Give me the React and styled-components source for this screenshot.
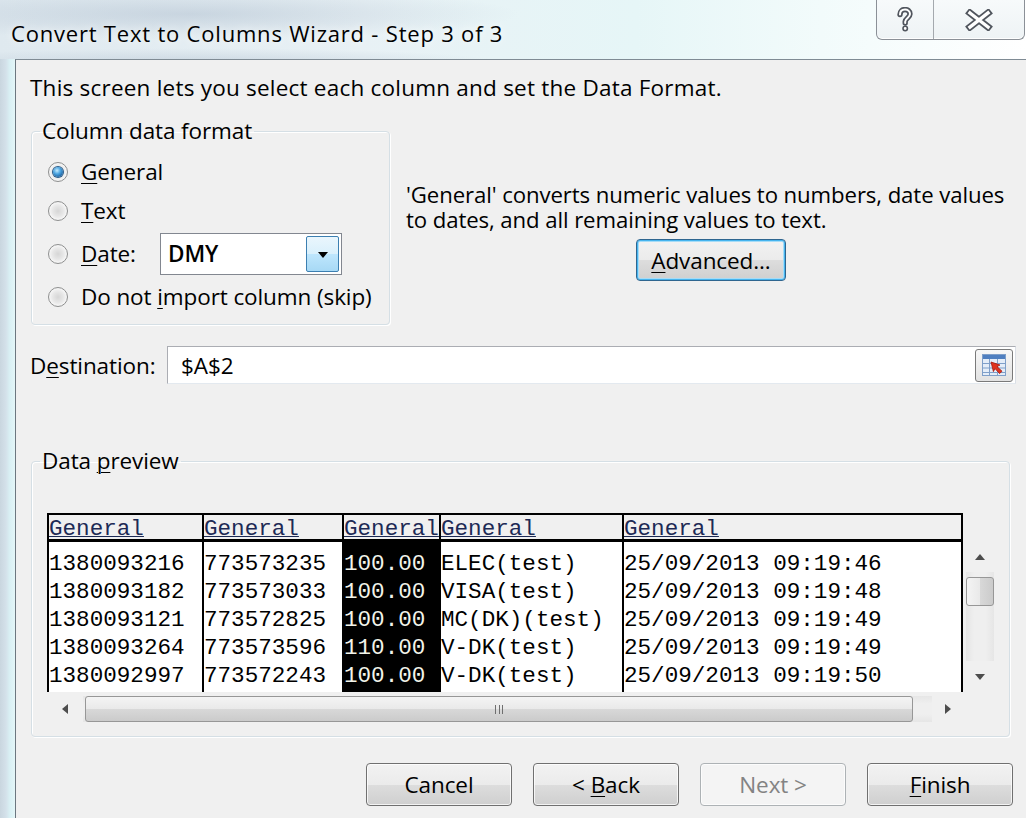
import React from 'react';
import styled, { createGlobalStyle } from 'styled-components';

const GlobalStyle = createGlobalStyle`
  html, body {
    margin: 0;
    padding: 0;
  }
  body {
    width: 1026px;
    height: 818px;
    overflow: hidden;
    font-family: 'Open Sans', 'Noto Sans', sans-serif;
    color: #000;
  }
`;

const ui = `'Open Sans', 'Noto Sans', sans-serif`;
const mono = `'Liberation Mono', 'Courier New', monospace`;

const columns = [
  { width: 155, values: ['1380093216', '1380093182', '1380093121', '1380093264', '1380092997'] },
  { width: 140, values: ['773573235', '773573033', '773572825', '773573596', '773572243'] },
  { width: 97, dark: true, values: ['100.00', '100.00', '100.00', '110.00', '100.00'] },
  { width: 183, values: ['ELEC(test)', 'VISA(test)', 'MC(DK)(test)', 'V-DK(test)', 'V-DK(test)'] },
  {
    width: 341,
    last: true,
    values: [
      '25/09/2013 09:19:46',
      '25/09/2013 09:19:48',
      '25/09/2013 09:19:49',
      '25/09/2013 09:19:49',
      '25/09/2013 09:19:50',
    ],
  },
];

const HelpGlyph = () => (
  <svg width="18" height="26" viewBox="0 0 18 26">
    <g fill="none" strokeLinecap="round" strokeLinejoin="round">
      <path d="M4 7.5C4 4 6.5 2.5 9 2.5s5 1.6 5 4.6c0 3.4-4.5 4.2-4.8 7.4v1.6" stroke="#50555d" strokeWidth="5.4" />
      <path d="M4 7.5C4 4 6.5 2.5 9 2.5s5 1.6 5 4.6c0 3.4-4.5 4.2-4.8 7.4v1.6" stroke="#fff" strokeWidth="2" />
      <circle cx="9.2" cy="21.5" r="2.2" fill="#fff" stroke="#50555d" strokeWidth="1.6" />
    </g>
  </svg>
);

const CloseGlyph = () => (
  <svg width="28" height="22" viewBox="0 0 28 22">
    <g fill="none" strokeLinecap="square">
      <path d="M5 4L23 18M23 4L5 18" stroke="#50555d" strokeWidth="7" />
      <path d="M5 4L23 18M23 4L5 18" stroke="#fff" strokeWidth="3.4" />
    </g>
  </svg>
);

const RefEditGlyph = () => (
  <svg width="26" height="24" viewBox="0 0 26 24">
    <rect x="1.5" y="1.5" width="23" height="21" fill="#e4edf8" stroke="#7f9fc9" />
    <rect x="2" y="2" width="22" height="4" fill="#4f7fc0" />
    <path d="M2 10.5h22M2 15h22M2 19.5h22M8.5 6v16M16.5 6v16" stroke="#7f9fc9" strokeWidth="1" />
    <path d="M10 9l9 3-3 1.6 5 4.6-2.4 2.4-4.6-5-1.6 3z" fill="#e0321e" stroke="#a8190c" strokeWidth="0.8" />
  </svg>
);

const App = () => (
  <>
    <GlobalStyle />
    <Window>
      <TitleBar>
        <Title>Convert Text to Columns Wizard - Step 3 of 3</Title>
        <CaptionButtons>
          <CaptionButton $w={56}>
            <HelpGlyph />
          </CaptionButton>
          <CaptionButton $w={90} $divider>
            <CloseGlyph />
          </CaptionButton>
        </CaptionButtons>
      </TitleBar>
      <Body>
        <SideFrame />
        <Client>
          <Intro>This screen lets you select each column and set the Data Format.</Intro>

          <TopRow>
            <Group $w={359} $h={205}>
              <legend>Column data format</legend>
              <OptionList>
                <Option>
                  <Radio $checked />
                  <span>
                    <u>G</u>eneral
                  </span>
                </Option>
                <Option>
                  <Radio />
                  <span>
                    <u>T</u>ext
                  </span>
                </Option>
                <Option $h={46}>
                  <Radio />
                  <DateLabel>
                    <u>D</u>ate:
                  </DateLabel>
                  <Combo>
                    <ComboText>DMY</ComboText>
                    <ComboButton>
                      <Arrow $dir="down" $color="#000" />
                    </ComboButton>
                  </Combo>
                </Option>
                <Option>
                  <Radio />
                  <span>
                    Do not <u>i</u>mport column (skip)
                  </span>
                </Option>
              </OptionList>
            </Group>

            <Explain>
              <ExplainText>
                'General' converts numeric values to numbers, date values
                <br />
                to dates, and all remaining values to text.
              </ExplainText>
              <PushButton $w={150} $h={42} $default>
                <span>
                  <u>A</u>dvanced...
                </span>
              </PushButton>
            </Explain>
          </TopRow>

          <DestRow>
            <DestLabel>
              D<u>e</u>stination:
            </DestLabel>
            <RefEdit>
              <RefText>$A$2</RefText>
              <RefButton>
                <RefEditGlyph />
              </RefButton>
            </RefEdit>
          </DestRow>

          <Group $h={287} $mt={66} $mr={6}>
            <legend>
              Data <u>p</u>review
            </legend>
            <Preview>
              <Table>
                {columns.map((col, i) => (
                  <Column key={i} $w={col.width} $last={col.last}>
                    <HeadCell>General</HeadCell>
                    <Cells $dark={col.dark}>
                      {col.values.map((v, j) => (
                        <Cell key={j}>{v}</Cell>
                      ))}
                    </Cells>
                  </Column>
                ))}
              </Table>
              <VScroll>
                <ArrowBox $h={30}>
                  <Arrow $dir="up" />
                </ArrowBox>
                <VThumb />
                <ArrowBox $h={30}>
                  <Arrow $dir="down" />
                </ArrowBox>
              </VScroll>
              <HScroll>
                <ArrowBox $w={36}>
                  <Arrow $dir="left" />
                </ArrowBox>
                <HThumb>
                  <Grip />
                </HThumb>
                <ArrowBox $w={31}>
                  <Arrow $dir="right" />
                </ArrowBox>
              </HScroll>
            </Preview>
          </Group>

          <ButtonRow>
            <PushButton>
              <span>Cancel</span>
            </PushButton>
            <PushButton>
              <span>
                &lt; <u>B</u>ack
              </span>
            </PushButton>
            <PushButton $disabled>
              <span>Next &gt;</span>
            </PushButton>
            <PushButton>
              <span>
                <u>F</u>inish
              </span>
            </PushButton>
          </ButtonRow>
        </Client>
      </Body>
    </Window>
  </>
);

export default App;

const Window = styled.div`
  width: 1026px;
  height: 818px;
  display: flex;
  flex-direction: column;
  overflow: hidden;
  background:
    radial-gradient(ellipse 330px 26px at 190px 14px, rgba(150, 168, 190, 0.35), transparent),
    radial-gradient(ellipse 300px 14px at 200px 62px, rgba(150, 168, 190, 0.3), transparent),
    linear-gradient(90deg, #dfe9ef 0%, #e8f1f5 35%, #e6f6f7 62%, #f2fbfb 80%, #ffffff 100%);
`;

const TitleBar = styled.div`
  height: 59px;
  display: flex;
  align-items: flex-start;
  flex: none;
`;

const Title = styled.div`
  padding: 19px 0 0 11px;
  font-family: ${ui};
  font-size: 22px;
  line-height: 28px;
  letter-spacing: 0.8px;
  color: #000;
  text-shadow: 0 0 8px rgba(255, 255, 255, 0.95);
`;

const CaptionButtons = styled.div`
  margin-left: auto;
  margin-right: 1px;
  display: flex;
  height: 39px;
  border: 1px solid #8b9097;
  border-top: none;
  border-radius: 0 0 6px 6px;
  background: linear-gradient(#f7fafb, #eef3f5);
  box-shadow: inset 0 -1px 0 rgba(255, 255, 255, 0.9);
`;

const CaptionButton = styled.div`
  width: ${(p) => p.$w}px;
  display: flex;
  align-items: center;
  justify-content: center;
  border-left: ${(p) => (p.$divider ? '1px solid #a4a9ae' : 'none')};
`;

const Body = styled.div`
  flex: 1;
  display: flex;
  min-height: 0;
`;

const SideFrame = styled.div`
  width: 15px;
  flex: none;
  background: linear-gradient(90deg, #c9d6df 0%, #d4e1ea 40%, #d9f0f4 65%, #e4f6f8 100%);
`;

const Client = styled.div`
  flex: 1;
  display: flex;
  flex-direction: column;
  background: #f0f0f0;
  border-left: 1px solid #6c7780;
  border-top: 1px solid #7f8b94;
  padding: 16px 10px 0 14px;
  font-family: ${ui};
  font-size: 22.5px;
  letter-spacing: -0.1px;
  u {
    text-decoration-thickness: 1px;
    text-underline-offset: 3px;
  }
`;

const Intro = styled.div`
  line-height: 24px;
  white-space: nowrap;
  letter-spacing: 0.22px;
`;

const TopRow = styled.div`
  display: flex;
  margin-top: 20px;
`;

const Group = styled.fieldset`
  box-sizing: border-box;
  width: ${(p) => (p.$w ? `${p.$w}px` : 'auto')};
  height: ${(p) => p.$h}px;
  margin: ${(p) => p.$mt || 0}px ${(p) => p.$mr || 0}px 0 1px;
  padding: 0;
  border: 1px solid #d5dfe5;
  border-radius: 4px;
  box-shadow: inset 1px 1px 0 #fff, 1px 1px 0 #fff;
  min-width: 0;
  flex: none;
  legend {
    margin-left: 8px;
    padding: 0 2px;
    line-height: 22px;
  }
`;

const OptionList = styled.div`
  display: flex;
  flex-direction: column;
  gap: 1px;
  padding: 11px 0 0 16px;
`;

const Option = styled.label`
  display: flex;
  align-items: center;
  gap: 13px;
  height: ${(p) => p.$h || 38}px;
  line-height: 24px;
  white-space: nowrap;
`;

const Radio = styled.span`
  box-sizing: border-box;
  width: 20px;
  height: 20px;
  flex: none;
  border-radius: 50%;
  border: 1px solid #8e8f8f;
  background: radial-gradient(circle at 50% 50%, #d6d6d6 0%, #e6e6e6 40%, #f6f6f6 70%, #ffffff 100%);
  box-shadow: inset 0 0 0 1px #f4f4f4;
  display: flex;
  align-items: center;
  justify-content: center;
  &::after {
    content: '';
    display: ${(p) => (p.$checked ? 'block' : 'none')};
    width: 10px;
    height: 10px;
    border-radius: 50%;
    background: radial-gradient(circle at 40% 35%, #c5ecff 0%, #4aa3df 40%, #195d9c 80%, #0f4679 100%);
    box-shadow: 0 0 0 1px #2a5d8b;
  }
`;

const DateLabel = styled.span`
  width: 66px;
`;

const Combo = styled.div`
  box-sizing: border-box;
  width: 182px;
  height: 42px;
  display: flex;
  align-items: center;
  background: #fff;
  border: 1px solid #828790;
  padding: 2px;
`;

const ComboText = styled.span`
  flex: 1;
  padding-left: 5px;
  font-weight: 600;
`;

const ComboButton = styled.span`
  box-sizing: border-box;
  width: 33px;
  height: 100%;
  display: flex;
  align-items: center;
  justify-content: center;
  border: 1px solid #3c7fb1;
  border-radius: 2px;
  background: linear-gradient(#eaf6fd 0%, #d9f0fc 50%, #bee6fd 51%, #a7d9f5 100%);
`;

const Arrow = styled.span`
  width: 0;
  height: 0;
  border: 5px solid transparent;
  ${(p) => p.$dir === 'down' && `border-top: 6px solid ${p.$color || '#4d4d4d'}; border-bottom: 0; margin-top: 2px;`}
  ${(p) => p.$dir === 'up' && `border-bottom: 6px solid ${p.$color || '#4d4d4d'}; border-top: 0;`}
  ${(p) => p.$dir === 'left' && `border-right: 6px solid ${p.$color || '#4d4d4d'}; border-left: 0;`}
  ${(p) => p.$dir === 'right' && `border-left: 6px solid ${p.$color || '#4d4d4d'}; border-right: 0;`}
`;

const Explain = styled.div`
  flex: 1;
  min-width: 0;
  display: flex;
  flex-direction: column;
  align-items: center;
  padding: 62px 0 0 16px;
`;

const ExplainText = styled.div`
  align-self: stretch;
  font-size: 22.2px;
  line-height: 25px;
  margin-bottom: 7px;
  white-space: nowrap;
`;

const PushButton = styled.div`
  box-sizing: border-box;
  width: ${(p) => p.$w || 146}px;
  height: ${(p) => p.$h || 43}px;
  display: flex;
  align-items: center;
  justify-content: center;
  border-radius: 4px;
  white-space: nowrap;
  border: 1px solid ${(p) => (p.$disabled ? '#adb2b5' : p.$default ? '#2f6690' : '#707070')};
  background: ${(p) =>
    p.$disabled ? '#f4f4f4' : 'linear-gradient(#f2f2f2 0%, #ebebeb 50%, #dddddd 51%, #cfcfcf 100%)'};
  color: ${(p) => (p.$disabled ? '#838383' : '#000')};
  box-shadow: ${(p) =>
    p.$default ? 'inset 0 0 0 1px #46b4ee, inset 0 0 0 2px #a6dcf7' : 'inset 0 0 0 1px rgba(255,255,255,0.75)'};
`;

const DestRow = styled.div`
  display: flex;
  align-items: center;
  margin-top: 21px;
`;

const DestLabel = styled.span`
  width: 137px;
  flex: none;
`;

const RefEdit = styled.div`
  box-sizing: border-box;
  flex: 1;
  height: 38px;
  display: flex;
  align-items: center;
  background: #fff;
  border: 1px solid #abadb3;
  border-bottom-color: #e3e9ef;
  border-right-color: #dbdfe6;
  padding-right: 2px;
`;

const RefText = styled.span`
  flex: 1;
  padding-left: 13px;
`;

const RefButton = styled.span`
  box-sizing: border-box;
  width: 38px;
  height: 33px;
  display: flex;
  align-items: center;
  justify-content: center;
  border: 1px solid #7a7a7a;
  border-radius: 3px;
  background: linear-gradient(#f7f7f7, #e2e2e2);
`;

const Preview = styled.div`
  display: grid;
  grid-template-columns: 916px 32px;
  grid-template-rows: 179px 30px;
  padding: 41px 0 0 15px;
`;

const Table = styled.div`
  display: flex;
  overflow: hidden;
  font-family: ${mono};
  font-size: 22.6px;
  letter-spacing: 0;
`;

const Column = styled.div`
  box-sizing: border-box;
  width: ${(p) => p.$w}px;
  flex: none;
  display: flex;
  flex-direction: column;
  border-left: 2px solid #000;
  border-right: ${(p) => (p.$last ? '2px solid #000' : 'none')};
  overflow: hidden;
`;

const HeadCell = styled.div`
  height: 24px;
  border-top: 2px solid #000;
  border-bottom: 3px solid #000;
  background: #f0f0f0;
  color: #1d2a55;
  line-height: 29px;
  white-space: nowrap;
  text-decoration: underline;
  text-decoration-thickness: 1px;
  text-underline-offset: 1px;
`;

const Cells = styled.div`
  flex: 1;
  padding-top: 8px;
  background: ${(p) => (p.$dark ? '#000' : '#fff')};
  color: ${(p) => (p.$dark ? '#f2f4ea' : '#000')};
`;

const Cell = styled.div`
  height: 28px;
  line-height: 28px;
  white-space: nowrap;
`;

const VScroll = styled.div`
  grid-row: 1;
  grid-column: 2;
  margin: 29px 1px 1px 3px;
  display: flex;
  flex-direction: column;
  align-items: stretch;
  background: linear-gradient(90deg, #e6e6e6, #efefef 30%, #efefef 70%, #e6e6e6);
`;

const ArrowBox = styled.div`
  flex: none;
  width: ${(p) => (p.$w ? `${p.$w}px` : 'auto')};
  height: ${(p) => (p.$h ? `${p.$h}px` : 'auto')};
  display: flex;
  align-items: center;
  justify-content: center;
  background: #f0f0f0;
`;

const VThumb = styled.div`
  height: 29px;
  margin: 5px 0 auto;
  box-sizing: border-box;
  border: 1px solid #979797;
  border-radius: 3px;
  background: linear-gradient(90deg, #f4f4f4 0%, #e9e9e9 50%, #d8d8d8 51%, #cbcbcb 100%);
`;

const HScroll = styled.div`
  grid-row: 2;
  grid-column: 1;
  margin-top: 4px;
  display: flex;
  align-items: stretch;
  background: linear-gradient(#e6e6e6, #efefef 30%, #efefef 70%, #e6e6e6);
`;

const HThumb = styled.div`
  box-sizing: border-box;
  width: 828px;
  margin-left: 2px;
  border: 1px solid #979797;
  border-radius: 3px;
  background: linear-gradient(#f4f4f4 0%, #e9e9e9 50%, #d8d8d8 51%, #cbcbcb 100%);
  display: flex;
  align-items: center;
  justify-content: center;
  margin-right: auto;
`;

const Grip = styled.span`
  width: 8px;
  height: 9px;
  background: repeating-linear-gradient(90deg, #6f6f6f 0 1px, transparent 1px 3.5px);
`;

const ButtonRow = styled.div`
  display: flex;
  justify-content: flex-end;
  gap: 21px;
  margin: 26px 3px 0 0;
`;
